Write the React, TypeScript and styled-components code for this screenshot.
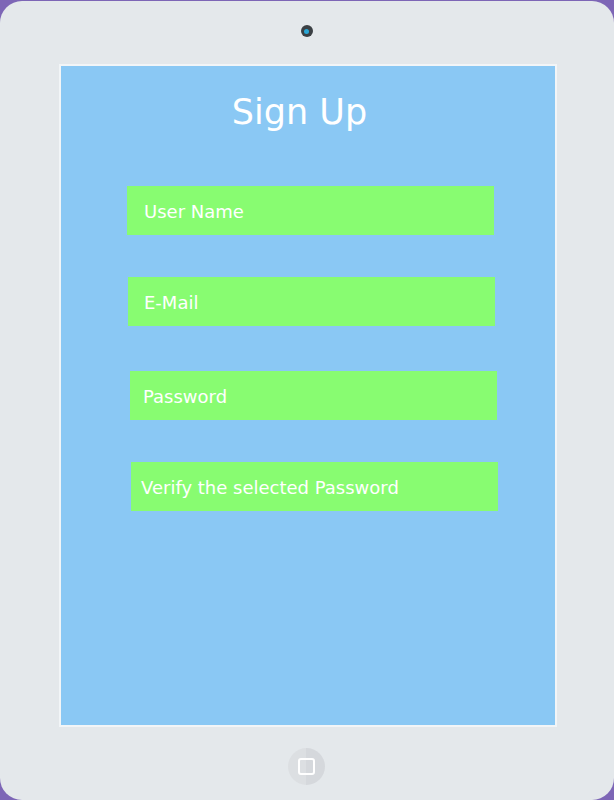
import * as React from "react"
import styled, { createGlobalStyle } from "styled-components"

const GlobalStyle = createGlobalStyle`
  html, body {
    margin: 0;
    padding: 0;
    background: #7d66b6;
  }
  * {
    box-sizing: border-box;
  }
`

const Tablet = styled.div`
  margin-top: 1px;
  width: 614px;
  height: 799px;
  border-radius: 22px;
  background: #e4e8eb;
  display: flex;
  flex-direction: column;
  font-family: "DejaVu Sans", Verdana, sans-serif;
`

const Camera = styled.div`
  align-self: center;
  margin: 24px 0 0 -1px;
  width: 12px;
  height: 12px;
  border-radius: 50%;
  background: #3b4044;
  display: flex;
  align-items: center;
  justify-content: center;

  &::after {
    content: "";
    width: 5px;
    height: 5px;
    border-radius: 50%;
    background: #2aa7d6;
  }
`

const Screen = styled.div`
  margin: 27px 0 0 59px;
  width: 498px;
  height: 663px;
  border: 2px solid #f2f5f7;
  background: #8ac8f4;
  padding-top: 26px;
  display: flex;
  flex-direction: column;
`

const Title = styled.h1`
  margin: 0;
  padding-right: 17px;
  text-align: center;
  font-size: 35px;
  line-height: 40px;
  font-weight: normal;
  color: #ffffff;
`

const Field = styled.div<{ $top: number; $left: number; $inset: number }>`
  margin-top: ${(p) => p.$top}px;
  margin-left: ${(p) => p.$left}px;
  width: 367px;
  height: 49px;
  padding: 2px 0 0 ${(p) => p.$inset}px;
  background: #88fc71;
  color: #ffffff;
  font-size: 18px;
  display: flex;
  align-items: center;
`

const HomeButton = styled.div`
  align-self: center;
  margin: 21px 0 0 -1px;
  width: 37px;
  height: 37px;
  border-radius: 50%;
  background: linear-gradient(90deg, #dcdfe2 50%, #d5d8dc 50%);
  display: flex;
  align-items: center;
  justify-content: center;

  &::after {
    content: "";
    width: 13px;
    height: 13px;
    border: 2px solid #ffffff;
    border-radius: 3px;
  }
`

const fields = [
  { label: "User Name", top: 54, left: 66, inset: 17 },
  { label: "E-Mail", top: 42, left: 67, inset: 16 },
  { label: "Password", top: 45, left: 69, inset: 13 },
  { label: "Verify the selected Password", top: 42, left: 70, inset: 10 },
]

const App = () => (
  <>
    <GlobalStyle />
    <Tablet>
      <Camera />
      <Screen>
        <Title>Sign Up</Title>
        {fields.map((f) => (
          <Field key={f.label} $top={f.top} $left={f.left} $inset={f.inset}>
            {f.label}
          </Field>
        ))}
      </Screen>
      <HomeButton />
    </Tablet>
  </>
)

export default App
